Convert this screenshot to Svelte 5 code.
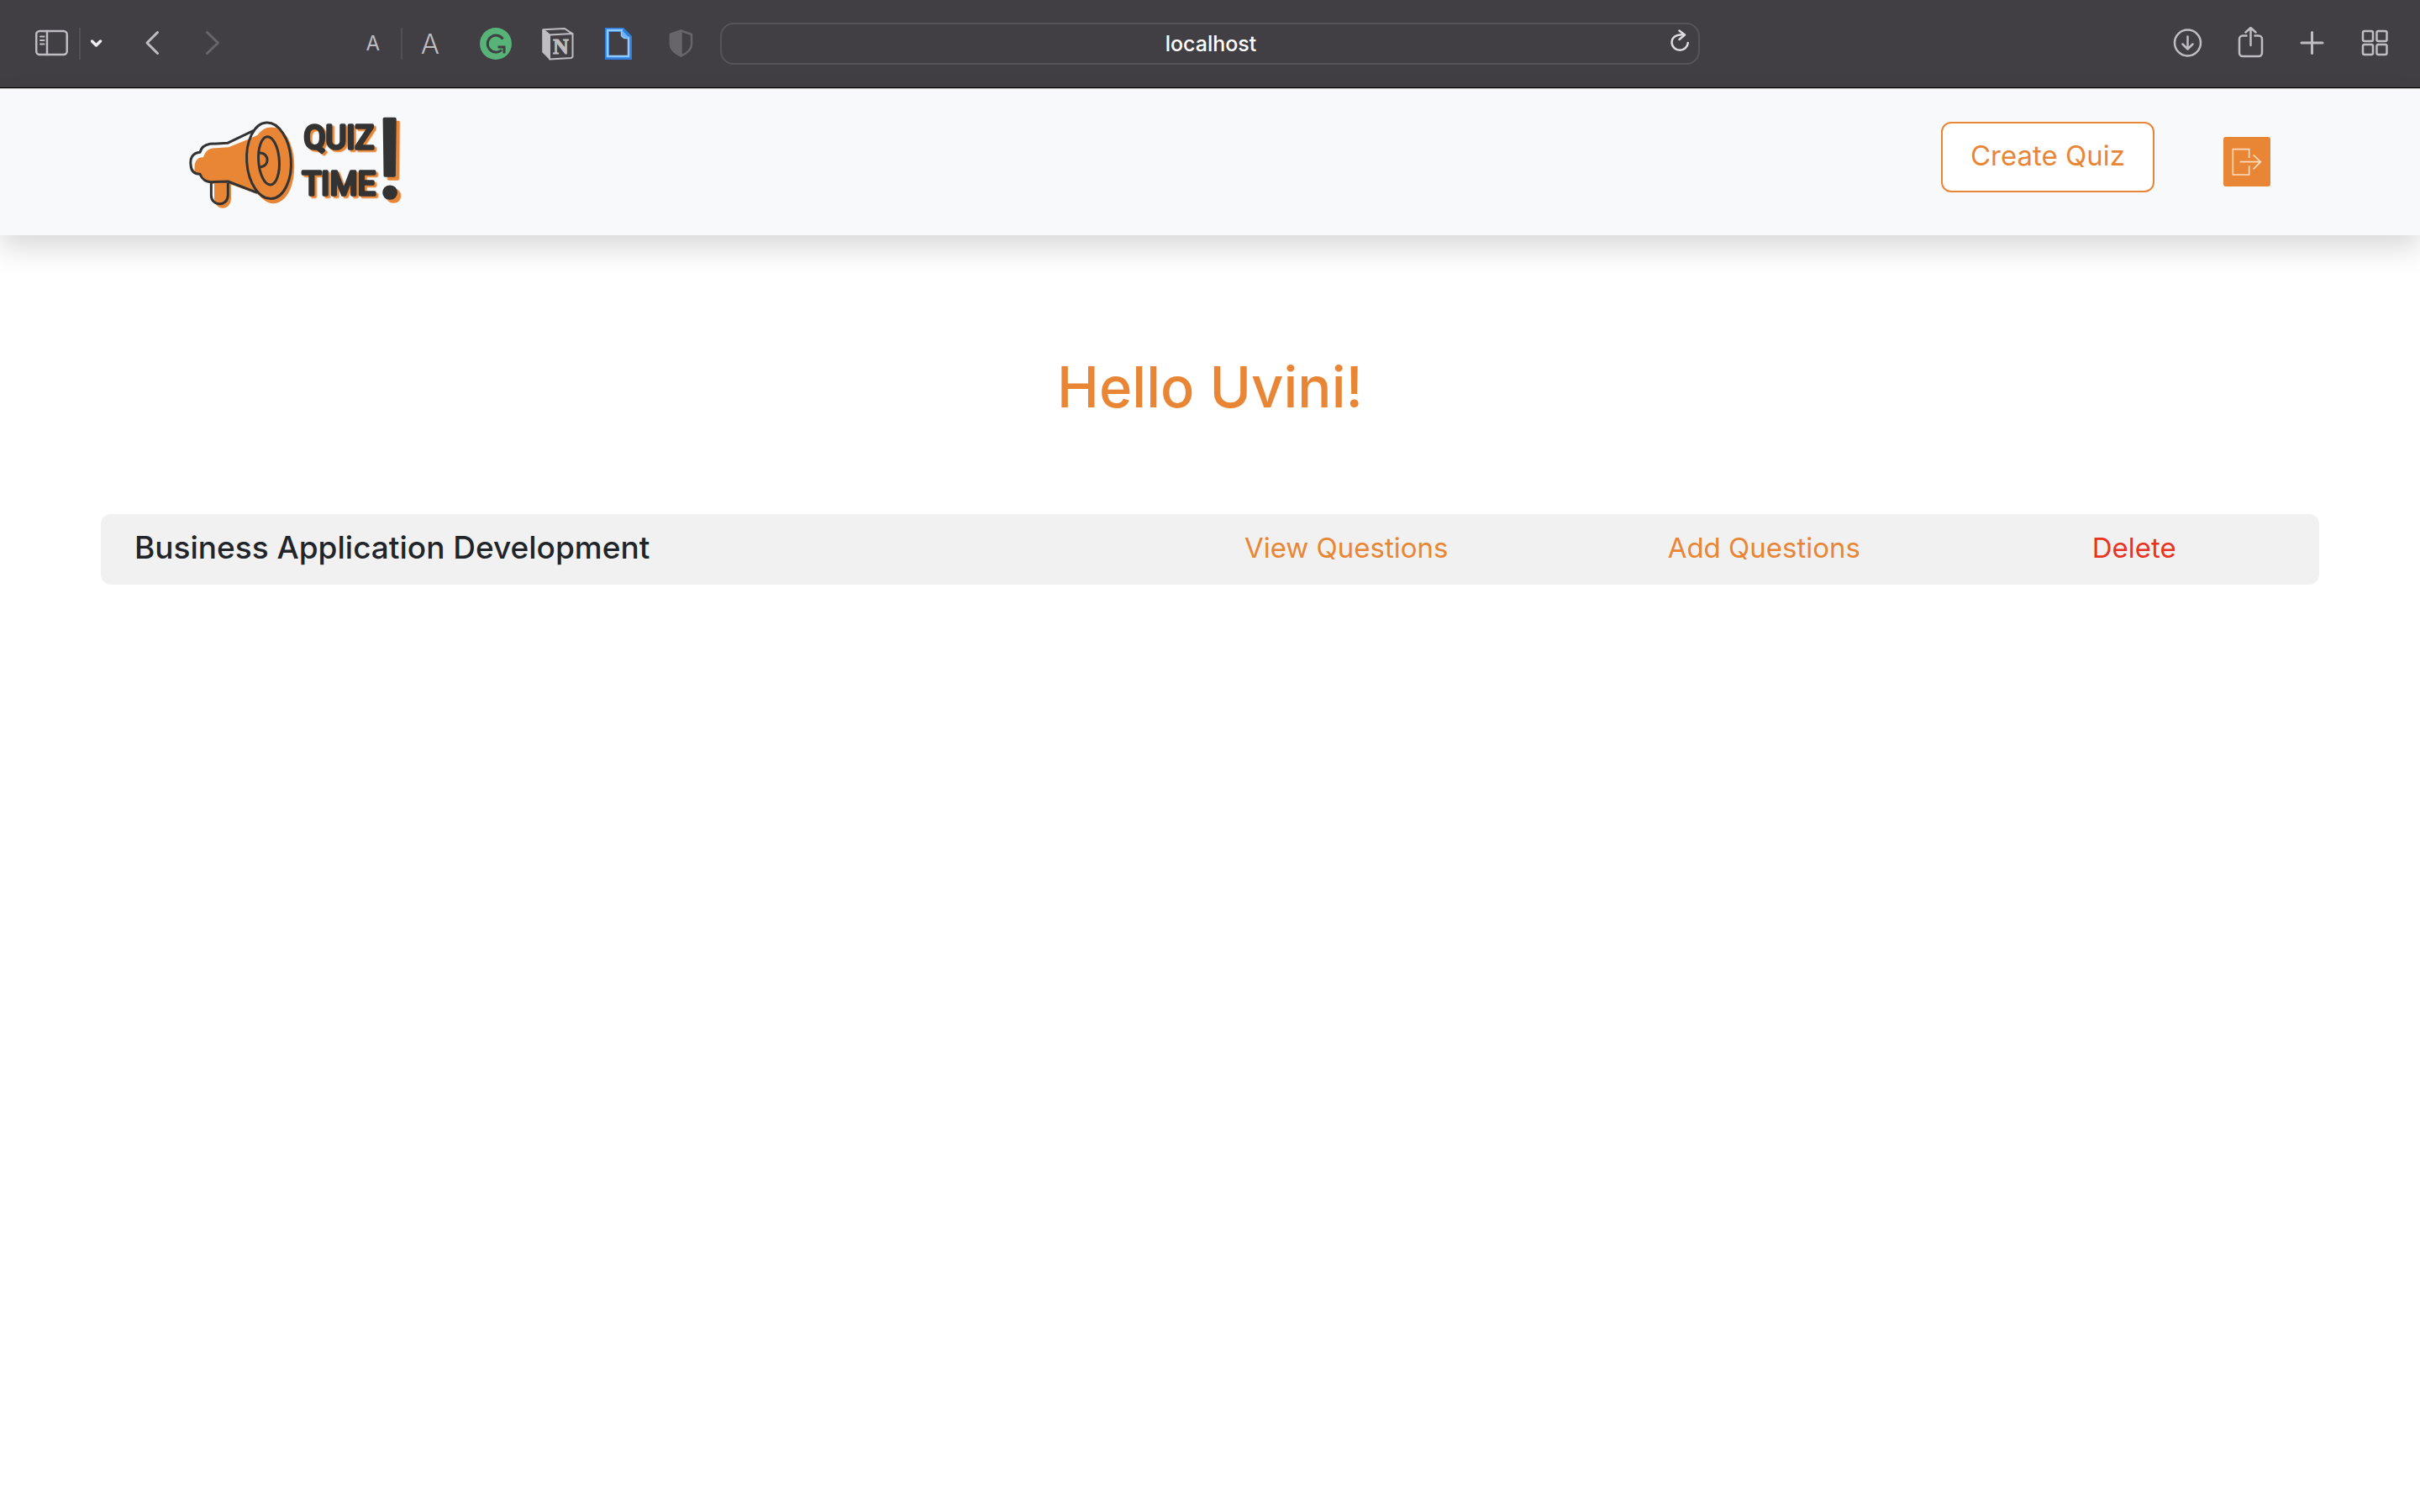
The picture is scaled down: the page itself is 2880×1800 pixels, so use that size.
<script>
  const userName = 'Uvini';
  const quizzes = [{ id: 1, title: 'Business Application Development' }];
  let address = $state('localhost');
</script>

<div class="browser-bar">
  <div class="bar-side">
    <div class="group sidebar-group">
      <button class="icon" aria-label="Show sidebar">
        <svg viewBox="0 0 40 40"><rect x="1.200" y="5" width="36.500" height="28" rx="4" /><path d="M14 5v28" /><path class="fine" d="M6 11.500h4.500M6 16h4.500M6 20.500h4.500" /></svg>
      </button>
      <span class="divider"></span>
      <button class="icon narrow" aria-label="Tab groups">
        <svg viewBox="4 0 16 40"><path class="bright" d="M5.500 17l5 5 5-5" /></svg>
      </button>
    </div>
    <div class="group history-group">
      <button class="icon" aria-label="Back">
        <svg viewBox="0 0 40 40"><path class="thick" d="M26.500 6.500L14 19l12.500 12.500" /></svg>
      </button>
      <button class="icon dim" aria-label="Forward" disabled>
        <svg viewBox="0 0 40 40"><path class="thick" d="M13.500 6.500L26.500 19l-13 12.500" /></svg>
      </button>
    </div>
    <div class="group size-group">
      <button class="icon letter small" aria-label="Smaller text">A</button>
      <span class="divider"></span>
      <button class="icon letter" aria-label="Larger text">A</button>
    </div>
    <div class="group tools">
      <button class="icon" aria-label="Grammarly">
        <svg viewBox="0 0 40 40"><circle class="green" cx="20" cy="20" r="19" /><path class="ink" d="M28.500 14.500A10 10 0 1 0 27 27.500" /><path class="ink" d="M22.500 24H30v7.500" /></svg>
      </button>
      <button class="icon" aria-label="Notion">
        <svg viewBox="0 0 40 40">
          <path class="solid" d="M2 3.500L10 9v29.500L2 30.500z" />
          <path class="fine" d="M2.500 3.300L28 2l9.500 6.300V35.500l-1.500 1.500-26 1.500V9.500l27.500-1.500M10 9.500L2.500 3.300" />
          <text class="solid-text" x="23.500" y="32" text-anchor="middle">N</text>
        </svg>
      </button>
      <button class="icon" aria-label="Reader">
        <svg viewBox="0 0 40 40"><path class="page-edge" d="M4.500 3.500H23L31.500 12v24.500h-27z" /><path class="page-line" d="M5 4h17v6.500l3 2.500h5V35H5z" /><path class="page-fold" d="M22 4l9 9h-5.500L22 10z" /></svg>
      </button>
      <button class="icon dim" aria-label="Privacy report">
        <svg viewBox="0 0 40 40"><path d="M18.500 4.500L31 9v12c0 6-6 10.500-12.500 13.500C12 31.500 6 27 6 21V9z" /><path class="dim-fill" d="M18.500 4.500v30C12 31.500 6 27 6 21V9z" /></svg>
      </button>
    </div>
  </div>

  <div class="address">
    <input aria-label="Address" bind:value={address} />
    <button class="icon reload" aria-label="Reload">
      <svg viewBox="0 0 40 40"><path d="M25 9.300C15 8.500 10.500 13 10.500 19a9.700 9.700 0 0 0 19.300 0" /><path d="M19.500 4.500L26 9.500l-6.500 5.500" /></svg>
    </button>
  </div>

  <div class="bar-side end">
    <button class="icon" aria-label="Downloads">
      <svg viewBox="0 0 40 40"><circle cx="19.500" cy="19" r="15.500" /><path d="M19.500 11.500V26M13.500 20.500l6 6 6-6" /></svg>
    </button>
    <button class="icon" aria-label="Share">
      <svg viewBox="0 0 40 40"><path d="M15.500 10.500H11a4 4 0 0 0-4 4V31a4 4 0 0 0 4 4h19a4 4 0 0 0 4-4V14.500a4 4 0 0 0-4-4h-4.500M20.500 22V1M14.500 6.500l6-5.500 6 5.500" /></svg>
    </button>
    <button class="icon" aria-label="New tab">
      <svg viewBox="0 0 40 40"><path class="thick" d="M19.500 6.500v25M7 19h25" /></svg>
    </button>
    <button class="icon" aria-label="Tab overview">
      <svg viewBox="0 0 40 40"><rect x="6" y="5" width="12" height="12" rx="2" /><rect x="22.500" y="5" width="12" height="12" rx="2" /><rect x="6" y="21" width="12" height="12" rx="2" /><rect x="22.500" y="21" width="12" height="12" rx="2" /></svg>
    </button>
  </div>
</div>

<header>
  <a class="logo" href="#home" aria-label="Quiz Time home">
    <svg viewBox="45 55 780 336">
      <g class="logo-fill">
        <path d="M135 290h60v64a29 32 0 0 1-60 0z" />
        <path d="M66 262C60 225 72 205 96 206C104 182 116 174 140 173L186 170L255 142L290 126C310 98 340 90 375 108C410 140 424 200 420 250C418 310 395 368 345 371C322 371 305 352 290 338L188 300H130C110 300 98 290 92 272Z" />
      </g>
      <g class="logo-line">
        <path d="M124 297v45c0 38 58 42 60 0v-45" />
        <path d="M276 110L182 155L120 158C98 162 88 172 84 188C58 190 48 208 51 232C52 256 66 266 84 266C92 284 102 294 124 294L184 292L288 332" />
        <ellipse cx="330" cy="218" rx="79" ry="136" transform="rotate(-4 330 218)" />
        <ellipse cx="330" cy="218" rx="37" ry="86" transform="rotate(-4 330 218)" />
        <path d="M297 190c36 0 36 50 2 50" />
      </g>
      <g class="logo-words">
        <text x="580" y="174" text-anchor="middle">QUIZ</text>
        <text x="580" y="340" text-anchor="middle">TIME</text>
      </g>
      <text class="logo-mark" x="761" y="350" text-anchor="middle">!</text>
    </svg>
  </a>
  <nav>
    <button class="create">Create Quiz</button>
    <button class="logout" aria-label="Log out">
      <svg viewBox="0 0 168 177"><path d="M92 75V44H34v91h58v-32M59 89h74M107 64l26 25-26 26" /></svg>
    </button>
  </nav>
</header>

<main>
  <h1>Hello {userName}!</h1>
  <table>
    <tbody>
      {#each quizzes as quiz (quiz.id)}
        <tr>
          <th scope="row">{quiz.title}</th>
          <td class="view"><a href="#view">View Questions</a></td>
          <td><a href="#add">Add Questions</a></td>
          <td><button class="delete">Delete</button></td>
        </tr>
      {/each}
    </tbody>
  </table>
</main>

<style>
  :global(body) {
    background: #fff;
    font-family: Inter, 'Liberation Sans', sans-serif;
  }
  button,
  input {
    font: inherit;
    color: inherit;
    background: none;
    border: 0;
    padding: 0;
    margin: 0;
  }
  a {
    color: inherit;
    text-decoration: none;
  }
  svg {
    display: block;
    width: 100%;
    height: 100%;
  }

  .browser-bar {
    display: grid;
    grid-template-columns: 1fr 40.5% 1fr;
    align-items: center;
    height: 104px;
    background: #413f44;
    border-bottom: 1px solid #000;
    color: #bfbdc2;
  }
  .bar-side,
  .group {
    display: flex;
    align-items: center;
  }
  .bar-side {
    padding: 0 25px 0 42px;
  }
  .end {
    justify-content: flex-end;
    gap: 34px;
    padding: 0 34px;
  }
  .sidebar-group {
    gap: 12px;
  }
  .history-group {
    gap: 32px;
    margin-left: 37px;
  }
  .size-group {
    gap: 13px;
    margin-left: auto;
  }
  .tools {
    gap: 34px;
    margin-left: 38px;
  }
  .divider {
    width: 2px;
    height: 38px;
    background: #525055;
  }
  .icon {
    flex: none;
    width: 40px;
    height: 40px;
  }
  .icon svg {
    fill: none;
    stroke: currentColor;
    stroke-width: 2.5;
    stroke-linecap: round;
    stroke-linejoin: round;
  }
  .thick {
    stroke-width: 3;
  }
  .fine {
    stroke-width: 2;
  }
  .narrow {
    width: 16px;
  }
  .dim {
    color: #67656a;
  }
  .letter {
    font-size: 33px;
    line-height: 40px;
    font-weight: 300;
  }
  .small {
    font-size: 24px;
    font-weight: 400;
  }
  .bright {
    stroke: #efedf2;
    stroke-width: 3.5;
  }
  .green {
    fill: #57b377;
    stroke: none;
  }
  .ink {
    stroke: #413f44;
    stroke-width: 3;
    stroke-linecap: butt;
    stroke-linejoin: miter;
  }
  .solid {
    fill: currentColor;
    stroke-width: 1;
  }
  .solid-text {
    fill: currentColor;
    stroke-width: 1;
    font: 700 26px 'Liberation Serif', serif;
  }
  .page-edge {
    stroke: #2f7fdf;
    stroke-width: 5;
    stroke-linejoin: miter;
  }
  .page-line {
    stroke: #8fcbff;
    stroke-linejoin: miter;
  }
  .page-fold {
    fill: #6fb5fb;
    stroke: none;
  }
  .dim-fill {
    fill: currentColor;
  }
  .address {
    display: flex;
    align-items: center;
    box-sizing: border-box;
    height: 50px;
    padding: 0 2px 0 44px;
    border: 2px solid #575559;
    border-radius: 16px;
  }
  .address input {
    flex: 1;
    min-width: 0;
    text-align: center;
    font-size: 25px;
    line-height: 32px;
    font-weight: 500;
    color: #fff;
  }
  .reload {
    color: #dddbe0;
  }

  header {
    display: flex;
    align-items: center;
    justify-content: space-between;
    box-sizing: border-box;
    height: 175px;
    padding: 0 178px 0 225px;
    border-top: 1px solid #c9c9c9;
    background: #f8f9fb;
    box-shadow: 0 16px 32px rgba(0, 0, 0, 0.15);
  }
  .logo {
    width: 260px;
    height: 112px;
  }
  .logo svg {
    overflow: visible;
  }
  .logo-fill {
    fill: #e98635;
  }
  .logo-line {
    fill: none;
    stroke: #333;
    stroke-width: 9;
    stroke-linejoin: round;
  }
  .logo-words,
  .logo-mark {
    font: 400 114px Roboto, sans-serif;
    fill: #333;
    stroke: #333;
    stroke-width: 11;
    stroke-linejoin: round;
    filter: drop-shadow(8px 7px 0 #e98635);
  }
  .logo-mark {
    font-size: 394px;
    filter: drop-shadow(13px 12px 0 #e98635);
  }
  nav {
    display: flex;
    align-items: center;
    gap: 82px;
    color: #e98635;
  }
  .create {
    height: 84px;
    margin-bottom: 12px;
    padding: 0 33px 4px;
    border: 2px solid #e98635;
    border-radius: 12px;
    background: #fff;
    font-size: 33px;
  }
  .logout {
    width: 56px;
    height: 59px;
    margin-bottom: 2px;
    border-radius: 3px;
    background: #e98635;
  }
  .logout svg {
    fill: none;
    stroke: #fbdcc0;
    stroke-width: 5;
  }

  main {
    padding: 0 120px;
  }
  h1 {
    margin: 132px 0 102px;
    text-align: center;
    font-size: 67px;
    line-height: 98px;
    font-weight: 500;
    color: #e98635;
  }
  table {
    width: 100%;
    table-layout: fixed;
    border-collapse: collapse;
    border-radius: 12px;
    background: #f1f1f1;
    font-size: 33px;
    line-height: 44px;
    color: #e98635;
  }
  th,
  td {
    width: 16.7%;
    padding: 18px 0 22px;
    text-align: center;
    font-weight: 400;
  }
  th {
    width: 45.7%;
    padding-left: 40px;
    box-sizing: border-box;
    text-align: left;
    font-weight: 500;
    font-size: 37px;
    color: #212529;
  }
  .view {
    width: 21%;
  }
  .delete {
    color: #ea3323;
  }
</style>
